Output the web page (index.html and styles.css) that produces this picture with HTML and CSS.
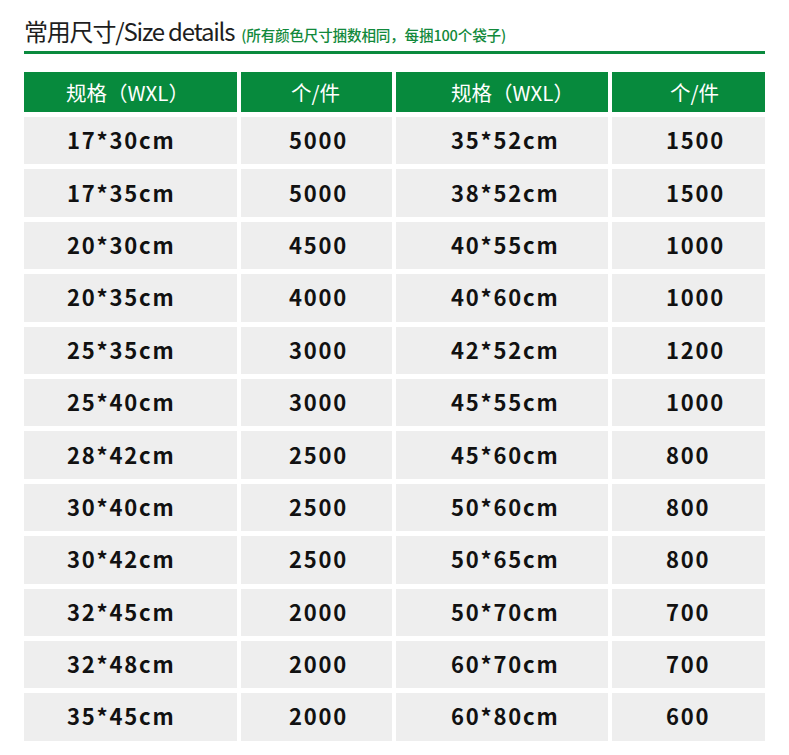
FILE: index.html
```html
<!DOCTYPE html>
<html lang="zh">
<head>
<meta charset="utf-8">
<title>常用尺寸</title>
<link rel="stylesheet" href="styles.css">
</head>
<body>
<div class="page">
  <div class="title-row">
    <h1 class="title">常用尺寸/Size details</h1>
    <span class="note">(所有颜色尺寸捆数相同，每捆100个袋子)</span>
  </div>
  <div class="rule"></div>
  <div class="table">
    <div class="th c1">规格（WXL）</div>
    <div class="th c2">个/件</div>
    <div class="th c3">规格（WXL）</div>
    <div class="th c4">个/件</div>

    <div class="td c1">17*30cm</div><div class="td c2">5000</div><div class="td c3">35*52cm</div><div class="td c4">1500</div>
    <div class="td c1">17*35cm</div><div class="td c2">5000</div><div class="td c3">38*52cm</div><div class="td c4">1500</div>
    <div class="td c1">20*30cm</div><div class="td c2">4500</div><div class="td c3">40*55cm</div><div class="td c4">1000</div>
    <div class="td c1">20*35cm</div><div class="td c2">4000</div><div class="td c3">40*60cm</div><div class="td c4">1000</div>
    <div class="td c1">25*35cm</div><div class="td c2">3000</div><div class="td c3">42*52cm</div><div class="td c4">1200</div>
    <div class="td c1">25*40cm</div><div class="td c2">3000</div><div class="td c3">45*55cm</div><div class="td c4">1000</div>
    <div class="td c1">28*42cm</div><div class="td c2">2500</div><div class="td c3">45*60cm</div><div class="td c4">800</div>
    <div class="td c1">30*40cm</div><div class="td c2">2500</div><div class="td c3">50*60cm</div><div class="td c4">800</div>
    <div class="td c1">30*42cm</div><div class="td c2">2500</div><div class="td c3">50*65cm</div><div class="td c4">800</div>
    <div class="td c1">32*45cm</div><div class="td c2">2000</div><div class="td c3">50*70cm</div><div class="td c4">700</div>
    <div class="td c1">32*48cm</div><div class="td c2">2000</div><div class="td c3">60*70cm</div><div class="td c4">700</div>
    <div class="td c1">35*45cm</div><div class="td c2">2000</div><div class="td c3">60*80cm</div><div class="td c4">600</div>
  </div>
</div>
</body>
</html>
```

FILE: styles.css
```css
html, body {
  margin: 0;
  padding: 0;
  background: #ffffff;
}

.page {
  padding: 14px 24px 0 24px;
  font-family: "Noto Sans CJK SC", "Noto Sans", sans-serif;
}

.title-row {
  display: flex;
  align-items: baseline;
  height: 37px;
}

.title {
  margin: 0;
  font-size: 24px;
  font-weight: 400;
  line-height: 34px;
  color: #1e1e1e;
  letter-spacing: -1.2px;
}

.note {
  margin-left: 7px;
  font-size: 14.6px;
  font-weight: 500;
  color: #12893b;
  letter-spacing: -0.2px;
}

.rule {
  height: 3px;
  background: #0a8a3e;
  width: 741px;
}

.table {
  margin-top: 18px;
  width: 741px;
  display: grid;
  grid-template-columns: 213px 151px 212px 153px;
  grid-template-rows: 40px repeat(12, 47.4px);
  column-gap: 4px;
  row-gap: 5px;
}

.th {
  background: #078a3d;
  color: #ffffff;
  font-size: 20.5px;
  font-weight: 400;
  display: flex;
  align-items: center;
}

.td {
  background: #eeeeee;
  color: #111111;
  font-size: 22px;
  font-weight: 700;
  letter-spacing: 1.8px;
  display: flex;
  align-items: center;
  padding-bottom: 3px;
}

.th.c1 { padding-left: 42px; }
.th.c2 { padding-left: 50px; }
.th.c3 { padding-left: 55px; }
.th.c4 { padding-left: 58px; }

.td.c1 { padding-left: 43px; }
.td.c2 { padding-left: 48px; }
.td.c3 { padding-left: 55px; }
.td.c4 { padding-left: 54px; }
```
